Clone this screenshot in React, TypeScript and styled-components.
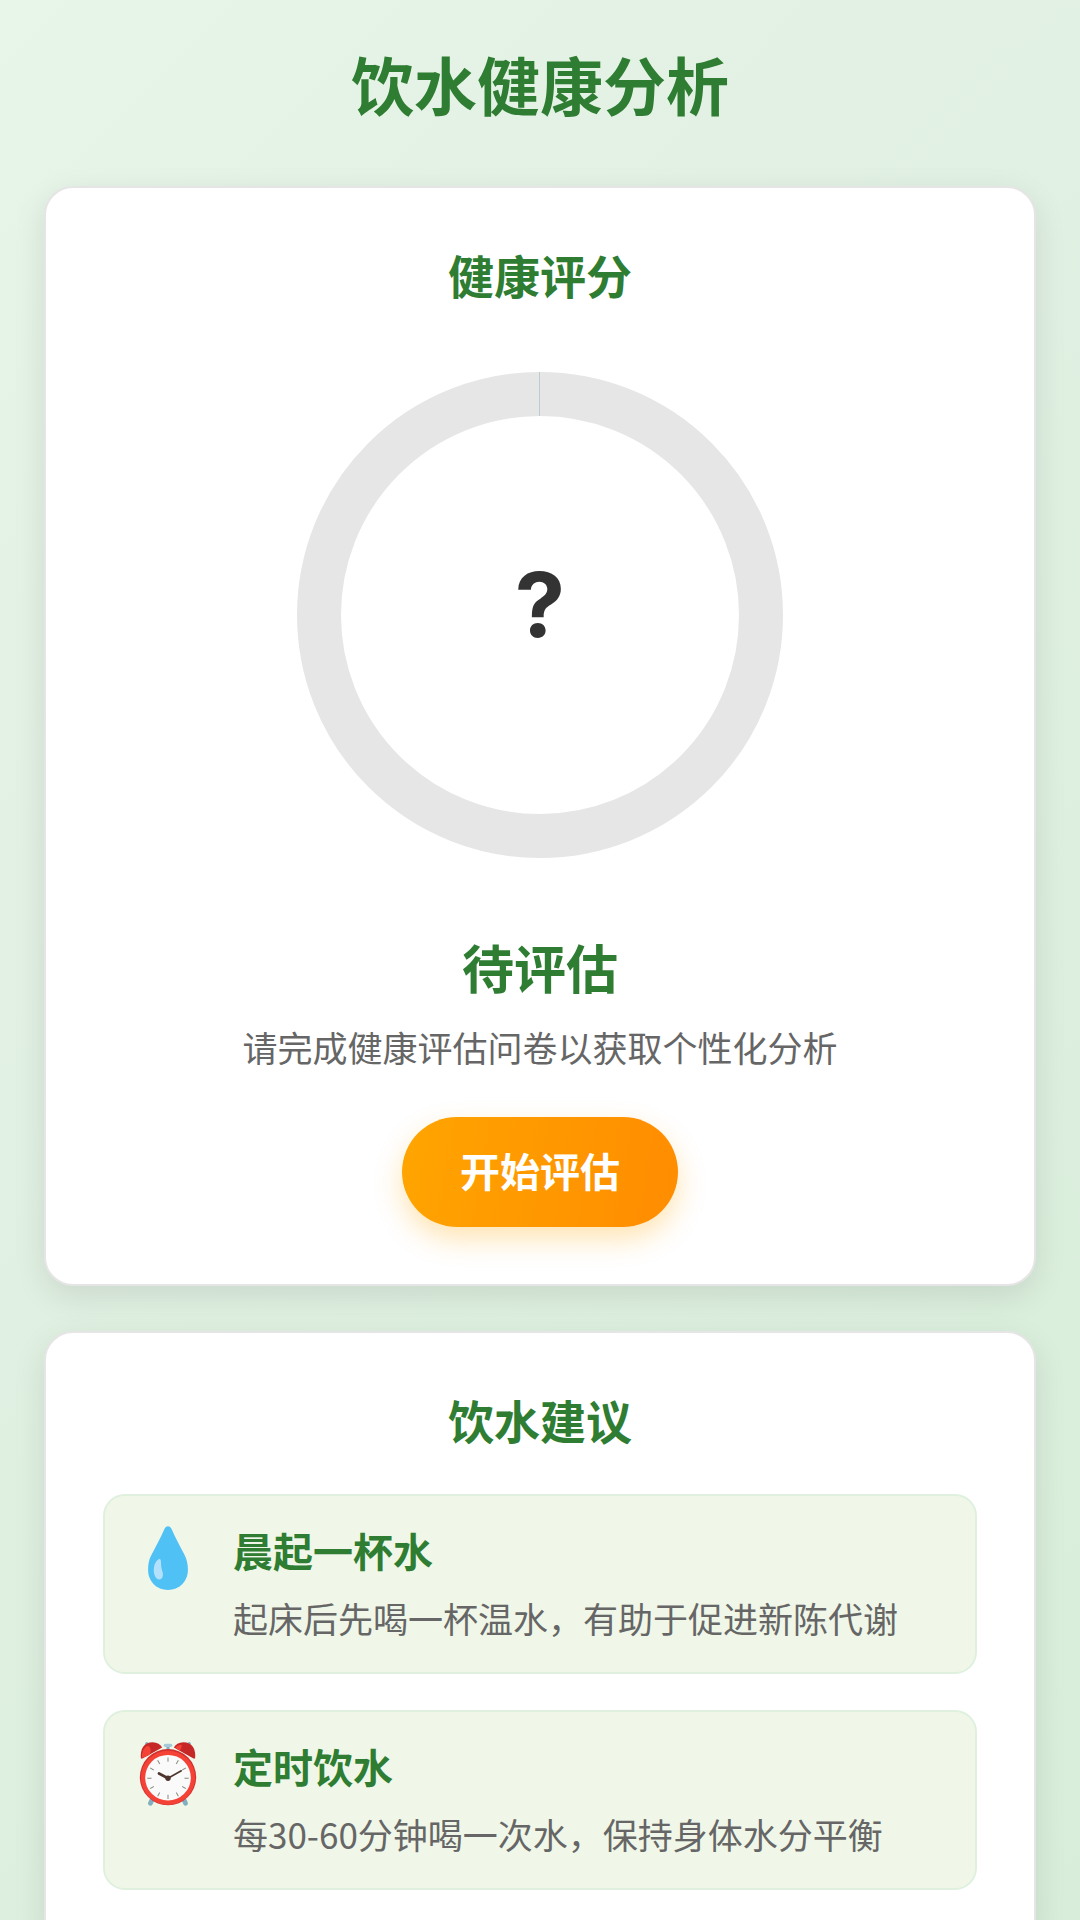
import React from "react";
import styled, { createGlobalStyle } from "styled-components";

const GlobalStyle = createGlobalStyle`
  *, *::before, *::after { box-sizing: border-box; }
  body {
    margin: 0;
    font-family: "Noto Sans CJK SC", "Noto Sans", sans-serif;
    background: #e2f1e4;
  }
  h1, h2, h3, p, ul { margin: 0; padding: 0; }
`;

const Page = styled.main`
  display: flex;
  flex-direction: column;
  gap: 45px;
  min-height: 100vh;
  padding: 44px 44px 0;
  background: linear-gradient(135deg, #e8f5e9 0%, #e2f1e4 30%, #d8eeda 100%);
`;

const PageTitle = styled.h1`
  padding-bottom: 19px;
  font-size: 63px;
  line-height: 78px;
  font-weight: 700;
  text-align: center;
  color: #2e7d32;
`;

const Card = styled.section`
  display: flex;
  flex-direction: column;
  align-items: center;
  padding: 57px;
  border: 2px solid #e5e5e5;
  border-radius: 29px;
  background: #fff;
  box-shadow: 0 10px 32px rgba(0, 0, 0, 0.1);
`;

const CardTitle = styled.h2`
  font-size: 46px;
  line-height: 58px;
  font-weight: 700;
  color: #2e7d32;
`;

const Gauge = styled.div`
  display: grid;
  place-items: center;
  margin: 69px 0 71px;
  > * { grid-area: 1 / 1; }
`;

const Ring = styled.svg`
  width: 486px;
  height: 486px;
`;

const Score = styled.span`
  padding-bottom: 20px;
  font-family: Inter, "Noto Sans CJK SC", sans-serif;
  font-size: 90px;
  line-height: 112px;
  font-weight: 700;
  color: #333;
`;

const Status = styled.h3`
  margin-bottom: 16px;
  font-size: 52px;
  line-height: 76px;
  font-weight: 700;
  color: #2e7d32;
`;

const Text = styled.p`
  font-size: 35px;
  line-height: 52px;
  color: #666;
`;

const StartButton = styled.button`
  margin-top: 44px;
  padding: 24px 58px 28px;
  border: 0;
  border-radius: 58px;
  font-family: inherit;
  font-size: 40px;
  line-height: 58px;
  font-weight: 700;
  color: #fff;
  background: linear-gradient(100deg, #ffa500, #ff8c00);
  box-shadow: 0 12px 28px rgba(255, 165, 0, 0.3);
  cursor: pointer;
`;

const Tips = styled.ul`
  display: flex;
  flex-direction: column;
  align-self: stretch;
  gap: 36px;
  margin-top: 46px;
  list-style: none;
`;

const Tip = styled.li`
  display: flex;
  align-items: flex-start;
  gap: 31px;
  padding: 28px 29px;
  border: 2px solid #dff0df;
  border-radius: 22px;
  background: #f0f7e8;
`;

const TipIcon = styled.svg`
  flex: none;
  width: 68px;
  height: 68px;
`;

const TipBody = styled.div`
  display: flex;
  flex-direction: column;
  gap: 16px;
`;

const TipTitle = styled.h3`
  font-size: 40px;
  line-height: 52px;
  font-weight: 700;
  color: #2e7d32;
`;

const DropIcon = () => (
  <TipIcon viewBox="0 0 128 128" aria-hidden="true">
    <path
      d="M64 4c-3 0-5 2-6.500 5C50 27 40 44 33 58 28 67 26.500 76 26.500 86c0 22 16 38 37.500 38s37.500-16 37.500-38c0-10-2-19-6.500-28C88 44 78 27 70.500 9 69 6 67 4 64 4z"
      fill="#50c1f5"
    />
    <path d="M47 66c4-2 4 5 4 12 1 10 5 14 3 21-2 8-12 7-15-2-4-11-1-26 8-31z" fill="#b3e1fc" />
  </TipIcon>
);

const ticks = Array.from({ length: 12 }, (_, i) => i * 30);

const ClockIcon = () => (
  <TipIcon viewBox="0 0 128 128" aria-hidden="true">
    <path d="M36 108l-5 11M92 108l5 11" stroke="#82aec0" strokeWidth="9" strokeLinecap="round" />
    <path d="M24 7l6 6M104 7l-6 6" stroke="#82aec0" strokeWidth="6" strokeLinecap="round" />
    <path d="M64 9v14" stroke="#82aec0" strokeWidth="6" />
    <path d="M59 10h10" stroke="#a5c9d8" strokeWidth="6" strokeLinecap="round" />
    <path d="M13 35C11 16 19 4 35 4c9 0 15 4 18 10L16 35z" fill="#c62828" />
    <path d="M115 35c2-19-6-31-22-31-9 0-15 4-18 10l37 21z" fill="#c62828" />
    <path d="M15 34c-1-11 4-21 12-23 6 5 5 12 2 17z" fill="#f44336" />
    <path d="M78 14c4-4 8-6 12-5 0 6-2 9-4 11z" fill="#f44336" />
    <circle cx="64" cy="70" r="53" fill="#d32f2f" />
    <circle cx="64" cy="71" r="51" fill="#f44336" />
    <circle cx="64" cy="71" r="43" fill="#fafafa" />
    {ticks.map((angle) => (
      <path
        key={angle}
        d="M64 33v8"
        stroke="#8d8d85"
        strokeWidth="2"
        transform={`rotate(${angle} 64 72)`}
      />
    ))}
    <path d="M47 63l17 9" fill="none" stroke="#4e342e" strokeWidth="5" strokeLinecap="round" />
    <path d="M64 72l25-14" fill="none" stroke="#4e342e" strokeWidth="3" strokeLinecap="round" />
    <circle cx="64" cy="72" r="5" fill="#4e342e" />
  </TipIcon>
);

const tips = [
  { Icon: DropIcon, title: "晨起一杯水", text: "起床后先喝一杯温水，有助于促进新陈代谢" },
  { Icon: ClockIcon, title: "定时饮水", text: "每30-60分钟喝一次水，保持身体水分平衡" },
];

export default function App() {
  return (
    <>
      <GlobalStyle />
      <Page>
        <PageTitle>饮水健康分析</PageTitle>
        <Card>
          <CardTitle>健康评分</CardTitle>
          <Gauge>
            <Ring viewBox="0 0 486 486" aria-hidden="true">
              <circle cx="243" cy="243" r="221" fill="none" stroke="#e6e6e6" strokeWidth="44" />
              <path d="M242.500 0v44" stroke="#b9ced3" strokeWidth="1" />
            </Ring>
            <Score>?</Score>
          </Gauge>
          <Status>待评估</Status>
          <Text>请完成健康评估问卷以获取个性化分析</Text>
          <StartButton type="button">开始评估</StartButton>
        </Card>
        <Card>
          <CardTitle>饮水建议</CardTitle>
          <Tips>
            {tips.map(({ Icon, title, text }) => (
              <Tip key={title}>
                <Icon />
                <TipBody>
                  <TipTitle>{title}</TipTitle>
                  <Text>{text}</Text>
                </TipBody>
              </Tip>
            ))}
          </Tips>
        </Card>
      </Page>
    </>
  );
}
